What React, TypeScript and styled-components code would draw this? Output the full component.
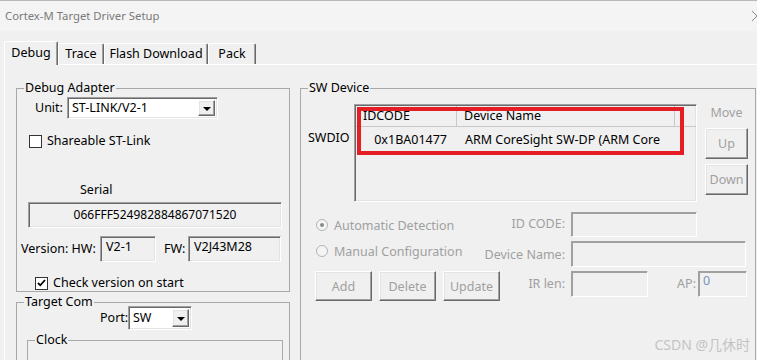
import styled, { createGlobalStyle, css } from "styled-components";

const GlobalStyle = createGlobalStyle`
  html, body {
    margin: 0;
    padding: 0;
    background: #f0f0f0;
    overflow: hidden;
  }
`;

const Window = styled.div`
  position: relative;
  width: 757px;
  height: 360px;
  overflow: hidden;
  background: #f0f0f0;
  font-family: "Noto Sans", "Noto Sans CJK SC", sans-serif;
  font-size: 12.5px;
  color: #000;
`;

const TitleBar = styled.div`
  height: 30px;
  border-top: 1px solid #b9b9b9;
  background: #f4f4f4;
  display: flex;
  align-items: center;
  justify-content: space-between;
  padding-left: 5px;
`;

const TitleText = styled.span`
  color: #7a7a7a;
  font-size: 11.3px;
  line-height: 16px;
`;

const CloseIcon = styled.svg`
  width: 12px;
  height: 12px;
  margin-right: -6px;
`;

const TabStrip = styled.div`
  height: 33px;
  display: flex;
  align-items: flex-end;
  padding-left: 4px;
  position: relative;
  z-index: 1;
`;

const Tab = styled.div<{ $active?: boolean; $w: number }>`
  box-sizing: border-box;
  width: ${(p) => p.$w}px;
  height: ${(p) => (p.$active ? 24 : 21)}px;
  margin-bottom: ${(p) => (p.$active ? -1 : 0)}px;
  background: #f0f0f0;
  border-top: 1px solid #fff;
  border-left: 1px solid #fff;
  border-right: 1px solid #696969;
  box-shadow: inset -1px 0 0 #a0a0a0;
  border-radius: 2px 2px 0 0;
  display: flex;
  justify-content: center;
  padding-top: ${(p) => (p.$active ? 3 : 2)}px;
  line-height: 16px;
  white-space: nowrap;
`;

const TabPanel = styled.div`
  width: 820px;
  height: 300px;
  margin-left: 4px;
  border-top: 1px solid #fff;
  border-left: 1px solid #fff;
  display: flex;
  gap: 10px;
  padding: 15px 0 0 11px;
`;

const LeftColumn = styled.div`
  width: 274px;
  display: flex;
  flex-direction: column;
`;

const Group = styled.fieldset<{ $h: number; $w?: number; $mt?: number; $ml?: number }>`
  box-sizing: border-box;
  margin: ${(p) => p.$mt ?? 0}px 0 0 ${(p) => p.$ml ?? 0}px;
  padding: 0;
  min-width: 0;
  width: ${(p) => (p.$w ? `${p.$w}px` : "auto")};
  height: ${(p) => p.$h}px;
  border: 1px solid #a8a8a8;
  display: flex;
  flex-direction: column;
`;

const Legend = styled.legend`
  margin-left: 7px;
  padding: 0 1px;
  line-height: 16px;
`;

const FormRow = styled.div<{ $mt?: number; $pl?: number; $h?: number }>`
  display: flex;
  align-items: center;
  margin-top: ${(p) => p.$mt ?? 0}px;
  padding-left: ${(p) => p.$pl ?? 0}px;
  height: ${(p) => p.$h ?? 16}px;
  white-space: nowrap;
`;

const Label = styled.span<{ $w?: number }>`
  width: ${(p) => (p.$w ? `${p.$w}px` : "auto")};
  flex-shrink: 0;
  line-height: 16px;
`;

const sunken = css`
  box-sizing: border-box;
  border-top: 1px solid #a0a0a0;
  border-left: 1px solid #a0a0a0;
  border-right: 1px solid #fff;
  border-bottom: 1px solid #fff;
  box-shadow: inset 1px 1px 0 #696969, inset -1px -1px 0 #e3e3e3;
`;

const raised = css`
  box-sizing: border-box;
  border-top: 1px solid #fff;
  border-left: 1px solid #fff;
  border-right: 1px solid #696969;
  border-bottom: 1px solid #696969;
  box-shadow: inset -1px -1px 0 #a0a0a0, inset 1px 1px 0 #e3e3e3;
  background: #f0f0f0;
`;

const Select = styled.div<{ $w: number; $h: number }>`
  ${sunken};
  width: ${(p) => p.$w}px;
  height: ${(p) => p.$h}px;
  background: #fff;
  display: flex;
  align-items: center;
  padding: 2px 2px 2px 4px;
`;

const SelectText = styled.span`
  flex: 1;
  line-height: 16px;
`;

const DropButton = styled.div`
  ${raised};
  width: 17px;
  height: 100%;
  display: flex;
  align-items: center;
  justify-content: center;

  &::after {
    content: "";
    border-left: 4px solid transparent;
    border-right: 4px solid transparent;
    border-top: 4px solid #000;
    margin-top: 1px;
  }
`;

const CheckBox = styled.span<{ $checked?: boolean }>`
  box-sizing: border-box;
  width: 13px;
  height: 13px;
  flex-shrink: 0;
  background: #fff;
  border: 1px solid #333;
  display: flex;
  align-items: center;
  justify-content: center;
  margin-right: 5px;

  svg {
    display: ${(p) => (p.$checked ? "block" : "none")};
  }
`;

const ReadBox = styled.div<{ $w: number; $h: number; $center?: boolean }>`
  ${sunken};
  width: ${(p) => p.$w}px;
  height: ${(p) => p.$h}px;
  flex-shrink: 0;
  background: #f0f0f0;
  padding: ${(p) => (p.$center ? "0" : "2px 0 0 5px")};
  display: flex;
  align-items: ${(p) => (p.$center ? "center" : "flex-start")};
  justify-content: ${(p) => (p.$center ? "center" : "flex-start")};
  line-height: 16px;
`;

const SerialBox = styled(ReadBox)`
  margin: 4px 0 0 11px;
  font-size: 12px;
`;

const RightGroup = styled(Group)`
  position: relative;
`;

const DeviceRow = styled.div`
  display: flex;
  margin-top: 8px;
  padding-left: 7px;
`;

const PortLabel = styled.span`
  width: 46px;
  margin-top: 26px;
  line-height: 16px;
  align-self: flex-start;
`;

const ListBox = styled.div`
  ${sunken};
  position: relative;
  width: 343px;
  height: 98px;
  background: #f0f0f0;
  padding: 1px 0 0 1px;
`;

const ListHeader = styled.div`
  display: flex;
  height: 20px;
  border-bottom: 1px solid #c8c8c8;
`;

const HeaderCell = styled.div<{ $w: number }>`
  box-sizing: border-box;
  width: ${(p) => p.$w}px;
  border-right: 1px solid #c8c8c8;
  padding-left: 7px;
  line-height: 20px;
`;

const ListRow = styled.div`
  display: flex;
  height: 24px;
  align-items: center;
`;

const Cell = styled.div<{ $w: number; $right?: boolean }>`
  box-sizing: border-box;
  width: ${(p) => p.$w}px;
  text-align: ${(p) => (p.$right ? "right" : "left")};
  padding: ${(p) => (p.$right ? "0 10px 0 0" : "0 0 0 8px")};
  white-space: nowrap;
  overflow: hidden;
`;

const Highlight = styled.div`
  position: absolute;
  left: 2px;
  top: 2px;
  width: 327px;
  height: 48px;
  box-sizing: border-box;
  border: 4px solid #e51d24;
  pointer-events: none;
`;

const SideColumn = styled.div`
  width: 43px;
  margin-left: 8px;
  display: flex;
  flex-direction: column;
  align-items: center;
`;

const SideCaption = styled.span`
  color: #a0a0a0;
  line-height: 16px;
  margin-top: 1px;
`;

const PushButton = styled.div<{ $w: number; $h: number; $mt?: number }>`
  ${raised};
  width: ${(p) => p.$w}px;
  height: ${(p) => p.$h}px;
  margin-top: ${(p) => p.$mt ?? 0}px;
  color: #a0a0a0;
  display: flex;
  align-items: center;
  justify-content: center;
  flex-shrink: 0;
`;

const DetectGrid = styled.div`
  display: grid;
  grid-template-columns: 160px 84px 176px;
  grid-template-rows: 25px 26px 30px;
  column-gap: 6px;
  row-gap: 4px;
  margin-top: 10px;
  padding-left: 14px;
  color: #a0a0a0;
  white-space: nowrap;
`;

const RadioRow = styled.div<{ $mt?: number }>`
  display: flex;
  align-items: center;
  align-self: start;
  margin-top: ${(p) => p.$mt ?? 0}px;
  height: 16px;
`;

const Radio = styled.span<{ $checked?: boolean }>`
  box-sizing: border-box;
  width: 12px;
  height: 12px;
  border-radius: 50%;
  border: 1px solid #b4b4b4;
  background: #f4f4f4;
  margin: 0 6px 0 1px;
  display: flex;
  align-items: center;
  justify-content: center;

  &::after {
    content: "";
    display: ${(p) => (p.$checked ? "block" : "none")};
    width: 4px;
    height: 4px;
    border-radius: 50%;
    background: #8a8a8a;
  }
`;

const FieldLabel = styled.span<{ $mt?: number }>`
  justify-self: end;
  align-self: start;
  margin-top: ${(p) => p.$mt ?? 0}px;
  line-height: 16px;
`;

const DisabledInput = styled.div<{ $w: number; $h: number }>`
  ${sunken};
  box-shadow: inset 1px 1px 0 #a0a0a0;
  width: ${(p) => p.$w}px;
  height: ${(p) => p.$h}px;
  background: #f0f0f0;
  color: #7d93b8;
  padding: 2px 0 0 4px;
  line-height: 14px;
  flex-shrink: 0;
`;

const ActionButtons = styled.div`
  display: flex;
  gap: 7px;
`;

const IrCell = styled.div`
  display: flex;
  align-items: flex-start;
`;

const ApLabel = styled.span`
  width: 49px;
  text-align: right;
  padding-right: 2px;
  margin-top: 5px;
  line-height: 16px;
`;

const Watermark = styled.div`
  position: absolute;
  right: 7px;
  bottom: 6px;
  font-size: 14px;
  color: #c4c4c4;
  line-height: 18px;
`;

function Check() {
  return (
    <svg width="9" height="8" viewBox="0 0 9 8">
      <path d="M1 4 L3.3 6.3 L8 1" fill="none" stroke="#000" strokeWidth="1.8" />
    </svg>
  );
}

export default function App() {
  return (
    <Window>
      <GlobalStyle />
      <TitleBar>
        <TitleText>Cortex-M Target Driver Setup</TitleText>
        <CloseIcon viewBox="0 0 12 12">
          <path d="M1 1 L11 11 M11 1 L1 11" stroke="#8a8a8a" strokeWidth="1" />
        </CloseIcon>
      </TitleBar>

      <TabStrip>
        <Tab $active $w={54}>Debug</Tab>
        <Tab $w={46}>Trace</Tab>
        <Tab $w={104}>Flash Download</Tab>
        <Tab $w={48}>Pack</Tab>
      </TabStrip>

      <TabPanel>
        <LeftColumn>
          <Group $h={223}>
            <Legend>Debug Adapter</Legend>
            <FormRow $mt={1} $pl={18} $h={22}>
              <Label $w={32}>Unit:</Label>
              <Select $w={151} $h={22}>
                <SelectText>ST-LINK/V2-1</SelectText>
                <DropButton />
              </Select>
            </FormRow>
            <FormRow $mt={14} $pl={12}>
              <CheckBox />
              <Label>Shareable ST-Link</Label>
            </FormRow>
            <FormRow $mt={33} $pl={63}>
              <Label>Serial</Label>
            </FormRow>
            <SerialBox $w={254} $h={26} $center>
              066FFF524982884867071520
            </SerialBox>
            <FormRow $mt={8} $pl={4} $h={26}>
              <Label $w={79}>Version: HW:</Label>
              <ReadBox $w={56} $h={26}>V2-1</ReadBox>
              <Label $w={24} style={{ marginLeft: 8 }}>FW:</Label>
              <ReadBox $w={93} $h={26}>V2J43M28</ReadBox>
            </FormRow>
            <FormRow $mt={13} $pl={18}>
              <CheckBox $checked>
                <Check />
              </CheckBox>
              <Label>Check version on start</Label>
            </FormRow>
          </Group>

          <Group $h={120} $mt={2}>
            <Legend>Target Com</Legend>
            <FormRow $mt={-4} $pl={83} $h={24}>
              <Label $w={28}>Port:</Label>
              <Select $w={64} $h={24}>
                <SelectText>SW</SelectText>
                <DropButton />
              </Select>
            </FormRow>
            <Group $h={60} $w={256} $mt={2} $ml={10}>
              <Legend>Clock</Legend>
            </Group>
          </Group>
        </LeftColumn>

        <RightGroup $h={300} $w={456}>
          <Legend>SW Device</Legend>
          <DeviceRow>
            <PortLabel>SWDIO</PortLabel>
            <ListBox>
              <ListHeader>
                <HeaderCell $w={101}>IDCODE</HeaderCell>
                <HeaderCell $w={218}>Device Name</HeaderCell>
              </ListHeader>
              <ListRow>
                <Cell $w={101} $right>
                  0x1BA01477
                </Cell>
                <Cell $w={230}>ARM CoreSight SW-DP (ARM Core</Cell>
              </ListRow>
              <Highlight />
            </ListBox>
            <SideColumn>
              <SideCaption>Move</SideCaption>
              <PushButton $w={43} $h={31} $mt={7}>Up</PushButton>
              <PushButton $w={43} $h={31} $mt={5}>Down</PushButton>
            </SideColumn>
          </DeviceRow>

          <DetectGrid>
            <RadioRow $mt={5}>
              <Radio $checked />
              <span>Automatic Detection</span>
            </RadioRow>
            <FieldLabel $mt={4}>ID CODE:</FieldLabel>
            <DisabledInput $w={126} $h={25} />

            <RadioRow $mt={2}>
              <Radio />
              <span>Manual Configuration</span>
            </RadioRow>
            <FieldLabel $mt={6}>Device Name:</FieldLabel>
            <DisabledInput $w={175} $h={26} />

            <ActionButtons>
              <PushButton $w={57} $h={30}>Add</PushButton>
              <PushButton $w={57} $h={30}>Delete</PushButton>
              <PushButton $w={57} $h={30}>Update</PushButton>
            </ActionButtons>
            <FieldLabel $mt={5}>IR len:</FieldLabel>
            <IrCell>
              <DisabledInput $w={77} $h={26} />
              <ApLabel>AP:</ApLabel>
              <DisabledInput $w={49} $h={26}>0</DisabledInput>
            </IrCell>
          </DetectGrid>
        </RightGroup>
      </TabPanel>

      <Watermark>CSDN @几休时</Watermark>
    </Window>
  );
}
